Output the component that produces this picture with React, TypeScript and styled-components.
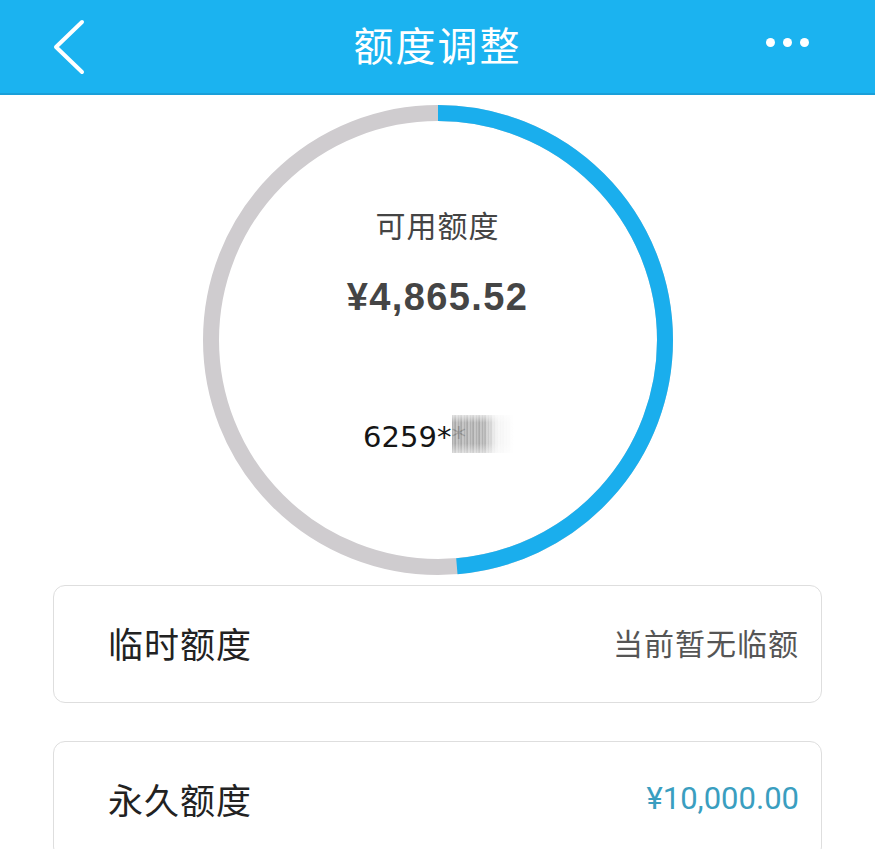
import React from "react";
import styled, { createGlobalStyle } from "styled-components";

const GlobalStyle = createGlobalStyle`
  html, body { margin: 0; padding: 0; background: #ffffff; }
  body { font-family: "Noto Sans CJK SC", "Noto Sans", sans-serif; overflow: hidden; }
`;

const Page = styled.div`
  width: 875px;
  height: 849px;
  overflow: hidden;
  background: #ffffff;
  display: flex;
  flex-direction: column;
  align-items: center;
  & > * { flex-shrink: 0; }
`;

const Header = styled.header`
  align-self: stretch;
  height: 93px;
  background: #1bb3f0;
  border-bottom: 2px solid #1a9fd9;
  display: grid;
  grid-template-columns: 1fr auto 1fr;
  align-items: center;
`;

const BackCell = styled.div`
  padding-left: 51px;
  display: flex;
  align-items: center;
`;

const Title = styled.h1`
  margin: 0;
  font-size: 40px;
  font-weight: 400;
  color: #ffffff;
  letter-spacing: 2px;
  line-height: 1;
  padding-bottom: 6px;
`;

const MoreCell = styled.div`
  padding-right: 66px;
  display: flex;
  justify-content: flex-end;
  gap: 8px;
  padding-bottom: 8px;
`;

const Dot = styled.span`
  width: 9px;
  height: 9px;
  border-radius: 50%;
  background: #ffffff;
`;

const Gauge = styled.section`
  margin-top: 10px;
  width: 470px;
  height: 470px;
  display: grid;
  & > * { grid-area: 1 / 1; }
`;

const GaugeContent = styled.div`
  display: flex;
  flex-direction: column;
  align-items: center;
  padding-top: 99px;
`;

const GaugeLabel = styled.div`
  font-size: 30px;
  line-height: 40px;
  color: #444444;
  letter-spacing: 1px;
`;

const GaugeAmount = styled.div`
  margin-top: 31px;
  font-family: "Liberation Sans", Arial, sans-serif;
  font-weight: 700;
  font-size: 38px;
  line-height: 44px;
  letter-spacing: 1.4px;
  color: #454545;
`;

const CardNo = styled.div`
  margin-top: 98px;
  margin-left: 2px;
  display: flex;
  align-items: center;
  font-family: "DejaVu Sans", sans-serif;
  font-size: 29px;
  line-height: 40px;
  color: #151515;
`;

const Blur = styled.span`
  width: 62px;
  height: 38px;
  margin-left: -14px;
  margin-top: -6px;
  background:
    linear-gradient(90deg, rgba(255,255,255,0) 0%, rgba(255,255,255,0) 50%, rgba(255,255,255,0.85) 72%, rgba(255,255,255,1) 100%),
    linear-gradient(0deg, rgba(255,255,255,0.5) 0%, rgba(255,255,255,0) 25%, rgba(255,255,255,0) 80%, rgba(255,255,255,0.6) 100%),
    repeating-linear-gradient(90deg, #9a9a9a 0px, #c2c2c2 2px, #8a8a8a 3px, #d0d0d0 5px, #a8a8a8 6px);
  opacity: 0.85;
`;

const CardRow = styled.div<{ $gap: number }>`
  margin-top: ${(p) => p.$gap}px;
  display: flex;
  justify-content: center;
`;

const Card = styled.div`
  width: 769px;
  height: 118px;
  box-sizing: border-box;
  border: 1px solid #dedede;
  border-radius: 12px;
  display: flex;
  align-items: center;
  justify-content: space-between;
  padding: 0 22px 0 54px;
`;

const CardLabel = styled.span`
  font-size: 35px;
  color: #222222;
  letter-spacing: 1px;
  line-height: 1;
  padding-bottom: 4px;
`;

const CardValue = styled.span<{ $accent?: boolean }>`
  font-size: ${(p) => (p.$accent ? "31px" : "30px")};
  font-family: ${(p) =>
    p.$accent ? `Roboto, "Liberation Sans", sans-serif` : `"Noto Sans CJK SC", sans-serif`};
  color: ${(p) => (p.$accent ? "#3a9ec0" : "#555555")};
  letter-spacing: ${(p) => (p.$accent ? "0px" : "1px")};
  line-height: 1;
  padding-bottom: 4px;
`;

const R = 227;
const C = 2 * Math.PI * R;
const available = 4865.52;
const total = 10000;

export default function App() {
  const frac = available / total;
  return (
    <>
      <GlobalStyle />
      <Page>
        <Header>
          <BackCell>
            <svg width="36" height="56" viewBox="0 0 36 56">
              <polyline
                points="31,3 5,28 31,53"
                fill="none"
                stroke="#ffffff"
                strokeWidth="4"
                strokeLinecap="round"
                strokeLinejoin="round"
              />
            </svg>
          </BackCell>
          <Title>额度调整</Title>
          <MoreCell>
            <Dot />
            <Dot />
            <Dot />
          </MoreCell>
        </Header>

        <Gauge>
          <svg width="470" height="470" viewBox="0 0 470 470">
            <circle cx="235" cy="235" r={R} fill="none" stroke="#cfcccf" strokeWidth="16" />
            <circle
              cx="235"
              cy="235"
              r={R}
              fill="none"
              stroke="#1aaeed"
              strokeWidth="16"
              strokeDasharray={`${frac * C} ${C}`}
              transform="rotate(-90 235 235)"
            />
          </svg>
          <GaugeContent>
            <GaugeLabel>可用额度</GaugeLabel>
            <GaugeAmount>¥4,865.52</GaugeAmount>
            <CardNo>
              6259**
              <Blur />
            </CardNo>
          </GaugeContent>
        </Gauge>

        <CardRow $gap={10}>
          <Card>
            <CardLabel>临时额度</CardLabel>
            <CardValue>当前暂无临额</CardValue>
          </Card>
        </CardRow>
        <CardRow $gap={38}>
          <Card>
            <CardLabel>永久额度</CardLabel>
            <CardValue $accent>¥10,000.00</CardValue>
          </Card>
        </CardRow>
      </Page>
    </>
  );
}
